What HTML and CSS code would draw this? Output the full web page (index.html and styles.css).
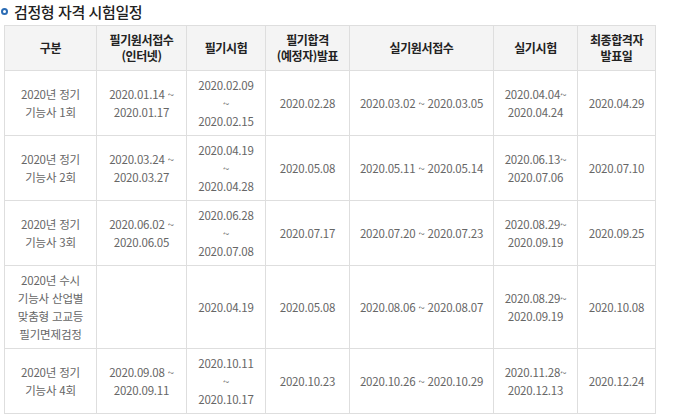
FILE: index.html
```html
<!DOCTYPE html>
<html lang="ko">
<head>
<meta charset="utf-8">
<link rel="stylesheet" href="styles.css">
</head>
<body>
<div class="page">
  <h3 class="title"><span class="bullet"></span>검정형 자격 시험일정</h3>
  <table class="sched">
    <colgroup>
      <col style="width:92px"><col style="width:90px"><col style="width:79px"><col style="width:84px"><col style="width:144px"><col style="width:84px"><col style="width:78px">
    </colgroup>
    <thead>
      <tr>
        <th>구분</th>
        <th>필기원서접수<br>(인터넷)</th>
        <th>필기시험</th>
        <th>필기합격<br>(예정자)발표</th>
        <th>실기원서접수</th>
        <th>실기시험</th>
        <th>최종합격자<br>발표일</th>
      </tr>
    </thead>
    <tbody>
      <tr>
        <td>2020년 정기<br>기능사 1회</td>
        <td>2020.01.14 ~<br>2020.01.17</td>
        <td>2020.02.09<br>~<br>2020.02.15</td>
        <td>2020.02.28</td>
        <td>2020.03.02 ~ 2020.03.05</td>
        <td>2020.04.04~<br>2020.04.24</td>
        <td>2020.04.29</td>
      </tr>
      <tr>
        <td>2020년 정기<br>기능사 2회</td>
        <td>2020.03.24 ~<br>2020.03.27</td>
        <td>2020.04.19<br>~<br>2020.04.28</td>
        <td>2020.05.08</td>
        <td>2020.05.11 ~ 2020.05.14</td>
        <td>2020.06.13~<br>2020.07.06</td>
        <td>2020.07.10</td>
      </tr>
      <tr>
        <td>2020년 정기<br>기능사 3회</td>
        <td>2020.06.02 ~<br>2020.06.05</td>
        <td>2020.06.28<br>~<br>2020.07.08</td>
        <td>2020.07.17</td>
        <td>2020.07.20 ~ 2020.07.23</td>
        <td>2020.08.29~<br>2020.09.19</td>
        <td>2020.09.25</td>
      </tr>
      <tr>
        <td>2020년 수시<br>기능사 산업별<br>맞춤형 고교등<br>필기면제검정</td>
        <td></td>
        <td>2020.04.19</td>
        <td>2020.05.08</td>
        <td>2020.08.06 ~ 2020.08.07</td>
        <td>2020.08.29~<br>2020.09.19</td>
        <td>2020.10.08</td>
      </tr>
      <tr>
        <td>2020년 정기<br>기능사 4회</td>
        <td>2020.09.08 ~<br>2020.09.11</td>
        <td>2020.10.11<br>~<br>2020.10.17</td>
        <td>2020.10.23</td>
        <td>2020.10.26 ~ 2020.10.29</td>
        <td>2020.11.28~<br>2020.12.13</td>
        <td>2020.12.24</td>
      </tr>
    </tbody>
  </table>
</div>
</body>
</html>
```

FILE: styles.css
```css
html, body {
  margin: 0;
  padding: 0;
  background: #fff;
}
.page {
  padding: 0 0 0 4px;
  font-family: "Noto Sans CJK KR", "Noto Sans", sans-serif;
}
.title {
  display: flex;
  align-items: center;
  gap: 6px;
  margin: 0 0 0 -3px;
  height: 25px;
  padding-bottom: 2px;
  box-sizing: border-box;
  font-size: 15px;
  font-weight: 500;
  color: #222;
  letter-spacing: -0.4px;
}
.bullet {
  width: 7px;
  height: 7px;
  border: 2px solid #2b6cb5;
  border-radius: 50%;
  box-sizing: border-box;
  flex: none;
}
.sched {
  border-collapse: collapse;
  table-layout: fixed;
  width: 652px;
  font-size: 11.5px;
  color: #666;
}
.sched th, .sched td {
  border: 1px solid #dedede;
  text-align: center;
  vertical-align: middle;
  line-height: 18px;
  padding: 4px 2px;
}
.sched th {
  background: #f4f4f4;
  color: #222;
  font-weight: 700;
  font-size: 12px;
  line-height: 16px;
  height: 36px;
  padding: 4px 2px;
  letter-spacing: -0.4px;
}
.sched td {
  height: 54px;
  padding: 5px 2px;
  letter-spacing: -0.2px;
}
```
